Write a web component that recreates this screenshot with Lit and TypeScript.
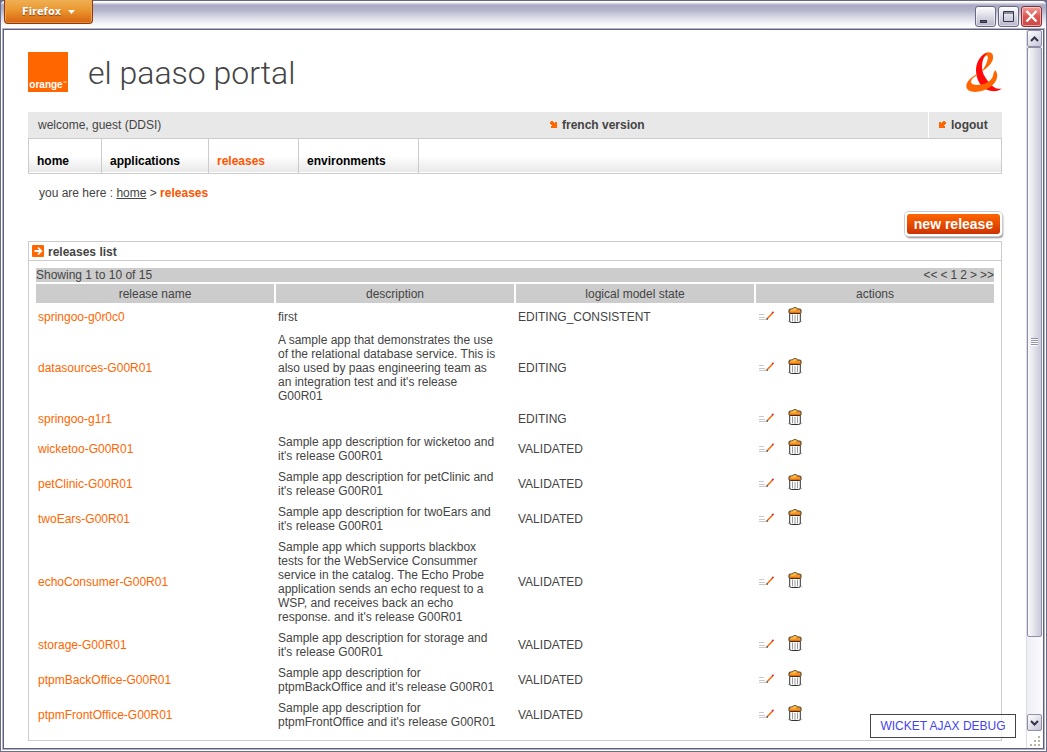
import { LitElement, html, css, svg } from "lit";
import { customElement } from "lit/decorators.js";

interface Release {
  name: string;
  description: string;
  state: string;
}

const RELEASES: Release[] = [
  { name: "springoo-g0r0c0", description: "first", state: "EDITING_CONSISTENT" },
  {
    name: "datasources-G00R01",
    description:
      "A sample app that demonstrates the use of the relational database service. This is also used by paas engineering team as an integration test and it's release G00R01",
    state: "EDITING",
  },
  { name: "springoo-g1r1", description: "", state: "EDITING" },
  { name: "wicketoo-G00R01", description: "Sample app description for wicketoo and it's release G00R01", state: "VALIDATED" },
  { name: "petClinic-G00R01", description: "Sample app description for petClinic and it's release G00R01", state: "VALIDATED" },
  { name: "twoEars-G00R01", description: "Sample app description for twoEars and it's release G00R01", state: "VALIDATED" },
  {
    name: "echoConsumer-G00R01",
    description:
      "Sample app which supports blackbox tests for the WebService Consummer service in the catalog. The Echo Probe application sends an echo request to a WSP, and receives back an echo response. and it's release G00R01",
    state: "VALIDATED",
  },
  { name: "storage-G00R01", description: "Sample app description for storage and it's release G00R01", state: "VALIDATED" },
  { name: "ptpmBackOffice-G00R01", description: "Sample app description for ptpmBackOffice and it's release G00R01", state: "VALIDATED" },
  { name: "ptpmFrontOffice-G00R01", description: "Sample app description for ptpmFrontOffice and it's release G00R01", state: "VALIDATED" },
];

const editIcon = html`<svg width="16" height="10" viewBox="0 0 16 10" aria-hidden="true">
  <path d="M1 3.500h5M1 6.500h6M1 8.500h7" stroke="#c8c8c8" stroke-width="1" fill="none" />
  <path d="M9.300 7.600L14.200 2.400" stroke="#ff6600" stroke-width="1.500" fill="none" />
  <path d="M8.600 8.600L9.600 7.400" stroke="#333" stroke-width="1.500" />
  <path d="M14 2.400L15.500 .8" stroke="#c22" stroke-width="1.500" />
</svg>`;

const trashIcon = html`<svg width="16" height="17" viewBox="0 0 16 17" aria-hidden="true">
  <ellipse cx="8" cy="14.500" rx="7.500" ry="1.500" fill="#c8c8c8" />
  <path d="M2.700 6.500h10.600v7.500q0 1.500-2 1.500H4.700q-2 0-2-1.500z" fill="#fff" stroke="#333" />
  <path d="M5.500 7.500v6.800M8 8v7M10.500 7.500v6.800" stroke="#999" stroke-width="1" />
  <path d="M2 3q0-1 1.500-1h2L6.500.8h3L10.500 2h2q1.500 0 1.500 1v2.500q0 1-1.500 1h-9q-1.500 0-1.500-1z" fill="#f79226" stroke="#40301c" />
  <path d="M6.500 1.900h3M4 3h4" stroke="#ffd24a" stroke-width="1.200" />
  <path d="M3 5.500h10" stroke="#e8700c" stroke-width="1" />
</svg>`;

const arrowShape = svg`<path d="M1 0h2v1h1v1h1V1h2v6H1V5h1V4H1V3H0V1h1z" />`;

@customElement("app-root")
export class AppRoot extends LitElement {
  static styles = css`
    :host {
      display: block;
      height: 100vh;
      font: 12px/14px "Liberation Sans", Arial, sans-serif;
      color: #444;
    }
    * { box-sizing: border-box; }
    svg { display: block; }
    button { font: inherit; margin: 0; padding: 0; cursor: pointer; }
    a { color: inherit; text-decoration: none; }
    .window {
      position: relative;
      display: flex;
      flex-direction: column;
      height: 100%;
      padding: 0 1px 1px;
      background: #6c6c8c;
    }
    .titlebar {
      display: flex;
      justify-content: space-between;
      align-items: flex-start;
      flex: none;
      height: 28px;
      padding: 0 4px 0 3px;
      border-top: 1px solid #66667f;
      border-radius: 4px 4px 0 0;
      background: linear-gradient(#fff 0, #fff 1px, #a9a9c3 4px, #b4b4ca 9px, #dcdce8 17px, #f6f6fa 23px, #fff 27px);
    }
    .firefox {
      display: flex;
      align-items: center;
      justify-content: center;
      gap: 7px;
      width: 89px;
      height: 24px;
      margin-top: -1px;
      border: 1px solid #8a3c0e;
      border-top: 0;
      border-radius: 0 0 4px 4px;
      background: linear-gradient(#f0b054, #ea962f 45%, #d8630f);
      box-shadow: inset 0 -1px #e48a3c, inset 1px 0 #eea457, inset -1px 0 #eea457;
      font: bold 11px/14px "DejaVu Sans Condensed", "DejaVu Sans", sans-serif;
      color: #fff;
      text-shadow: 0 1px 1px #8a3c0e;
    }
    .controls { display: flex; gap: 2px; padding-top: 5px; }
    .control {
      width: 21px;
      height: 21px;
      border: 1px solid #686886;
      border-radius: 3px;
      background: linear-gradient(#fff, #d6d6e2 55%, #b6b6ca);
      box-shadow: inset 0 0 0 1px rgba(255, 255, 255, 0.5);
    }
    .close { border-color: #8c2c34; background: linear-gradient(#f0a09c, #dc5652 50%, #cc4644); }
    .frame {
      display: flex;
      flex: 1;
      min-height: 0;
      padding: 1px 2px 2px;
      background: #fff;
    }
    .viewport {
      display: flex;
      flex: 1;
      min-width: 0;
      border: 1px solid #5f5f80;
      box-shadow: 0 0 0 1px #b4b4c8;
      background: #fff;
    }
    .page {
      flex: 1;
      min-width: 0;
      overflow: hidden;
      padding: 22px 24px 0;
    }
    .header { display: flex; align-items: center; height: 40px; gap: 20px; }
    .orange {
      display: flex;
      align-items: flex-end;
      justify-content: center;
      width: 40px;
      height: 40px;
      background: #ff6600;
      color: #fff;
      font-size: 10px;
      line-height: 14px;
      font-weight: bold;
    }
    .orange sup { font-size: 4px; line-height: 4px; padding-bottom: 7px; font-weight: normal; }
    .title {
      flex: 1;
      margin: 0;
      padding-top: 2px;
      font: 300 32px/40px Roboto, "Liberation Sans", sans-serif;
    }
    .userbar {
      display: grid;
      grid-template-columns: 522fr 378fr 74px;
      height: 26px;
      margin-top: 20px;
      background: #e8e8e8;
      line-height: 26px;
    }
    .welcome { padding-left: 10px; }
    .userlink { display: flex; align-items: center; font-weight: bold; gap: 4px; }
    .logout { border-left: 1px solid #fff; padding-left: 9px; gap: 5px; }
    .nav {
      display: grid;
      grid-template-columns: 73px 107px 90px 120px;
      height: 36px;
      border: 1px solid #ccc;
      background: linear-gradient(#fff 50%, #e8e8e8 97%, #fff 97%);
      font-weight: bold;
      line-height: 14px;
      color: #000;
    }
    .tab { padding: 15px 0 0 8px; border-right: 1px solid #ccc; }
    .active { color: #ff5500; }
    .crumbs { margin: 12px 0 0; padding-left: 11px; }
    .crumbs a { text-decoration: underline; }
    .crumbs b { color: #ff5500; }
    .toolbar { display: flex; justify-content: flex-end; padding: 12px 0 5px; }
    .create {
      width: 97px;
      height: 24px;
      border: 2px solid #fff;
      border-radius: 4px;
      background: linear-gradient(#ff6600, #cc3300) padding-box;
      box-shadow: 0 0 0 1px #ccc, 1px 2px 2px #888;
      color: #fff;
      font-weight: bold;
      font-size: 14px;
      line-height: 18px;
    }
    .panel { border: 1px solid #ccc; padding-bottom: 7px; }
    .heading {
      display: flex;
      align-items: center;
      gap: 4px;
      height: 19px;
      margin: 0;
      padding: 2px 3px 0;
      border-bottom: 1px solid #ccc;
      font-size: 12px;
      line-height: 14px;
    }
    .badge { margin-bottom: 3px; }
    .releases {
      width: calc(100% - 10px);
      margin: 5px 5px 0;
      table-layout: fixed;
      border-spacing: 2px;
    }
    th { font-weight: normal; background: #ccc; padding: 3px 0 2px; text-align: center; }
    .summary { padding: 0; }
    .pager { display: flex; justify-content: space-between; }
    .pages { display: flex; gap: 3px; }
    td { padding: 3px 2px 2px; vertical-align: middle; height: 23px; }
    .description { padding-right: 14px; }
    .name { color: #ff6600; }
    .actions { display: flex; align-items: center; gap: 13px; height: 16px; margin-top: -3px; }
    .action { border: 0; background: none; display: block; }
    .debug {
      position: absolute;
      right: 31px;
      bottom: 14px;
      width: 146px;
      height: 24px;
      border: 1px solid #444;
      background: rgba(255, 255, 255, 0.7);
      color: #4444ee;
      line-height: 22px;
      text-align: center;
    }
    .scroll {
      display: flex;
      flex-direction: column;
      flex: none;
      width: 17px;
      padding-right: 1px;
      border-left: 1px solid #dcdce4;
      background: linear-gradient(90deg, #eeeef5, #fbfbfe);
    }
    .arrow {
      display: flex;
      align-items: center;
      justify-content: center;
      flex: none;
      height: 17px;
      border: 1px solid #8e8ea4;
      border-radius: 2px;
      background: linear-gradient(135deg, #fff, #c4c4d6);
    }
    .track { flex: 1; display: flex; flex-direction: column; }
    .thumb {
      display: flex;
      align-items: center;
      justify-content: center;
      height: 88.4%;
      border: 1px solid #8e8ea4;
      border-radius: 2px;
      background: linear-gradient(90deg, #fafafc, #c8c8d8);
    }
    .grip { width: 7px; height: 8px; background: repeating-linear-gradient(#8e8ea4 0 1px, #fff 1px 2px); }
    .corner { flex: none; display: flex; justify-content: flex-end; align-items: flex-end; height: 17px; background: #fff; }
  `;

  render() {
    return html`
      <div class="window">
        <div class="titlebar">
          <button class="firefox">Firefox
            <svg width="7" height="4" viewBox="0 0 7 4"><path d="M0 0h7L3.5 4z" fill="#fff" /></svg>
          </button>
          <div class="controls">
            <button class="control" aria-label="Minimize">
              <svg width="19" height="19"><path d="M4 13h7v3H4z" fill="#33334d" /><path d="M5 14h5v1H5z" fill="#555570" /></svg>
            </button>
            <button class="control" aria-label="Maximize">
              <svg width="19" height="19"><path d="M4.5 4.5h10v10h-10zM4 6h11" fill="none" stroke="#33334d" /></svg>
            </button>
            <button class="control close" aria-label="Close">
              <svg width="19" height="19"><path d="M4.5 4L14.5 14.5M14.5 4L4.5 14.5" stroke="#fff" stroke-width="2.4" /></svg>
            </button>
          </div>
        </div>
        <div class="frame">
          <div class="viewport">
            <main class="page">
              <header class="header">
                <div class="orange">orange<sup>™</sup></div>
                <h1 class="title">el paaso portal</h1>
                <svg width="36" height="41" viewBox="0 0 36 41" aria-hidden="true">
                  <path d="M13 9C15 4 19 .3 22.500 .3C26.500 .3 27.800 3.500 26.800 7.500C25.500 12 21 16.500 15.500 19.500C18.500 15.500 21 11.500 21.700 7C22.200 3.500 21 2.700 19 4.500z" fill="#ff6600" />
                  <path d="M21.500 .6C15 2.500 10 10 10 18.500C10.300 27 14 34.500 20.500 37.500C25.500 39.800 32 40 35.800 36.500C31 37.500 27 35.500 23.500 31C19 25.500 16 21 16 14.500C16 9 17.800 4 21.500 .6z" fill="#ff0a0a" />
                  <path d="M11.300 22C5 25 .5 29.500 .3 34C.2 38.500 5 40.300 11 39.800C20 39 27.500 34 30.300 28C32 24 31.300 21 29.500 18.200C28 19.500 27.300 21.500 27.200 23C26.500 27.500 21.500 31.500 15.500 32.500C10 33.400 5.200 32.800 5 30C4.900 27.500 8 24.500 11.500 23z" fill="#ff6600" />
                </svg>
              </header>
              <div class="userbar">
                <span class="welcome">welcome, guest (DDSI)</span>
                <a class="userlink" href="#">
                  <svg width="8" height="8" viewBox="0 0 8 8" fill="#ff6600">${arrowShape}</svg>french version</a>
                <a class="userlink logout" href="#">
                  <svg width="8" height="8" viewBox="0 0 8 8" fill="#ff6600"><g transform="matrix(-1 0 0 1 8 0)">${arrowShape}</g></svg>logout</a>
              </div>
              <nav class="nav">
                <a class="tab" href="#">home</a>
                <a class="tab" href="#">applications</a>
                <a class="tab active" href="#">releases</a>
                <a class="tab" href="#">environments</a>
              </nav>
              <p class="crumbs">you are here : <a href="#">home</a> &gt; <b>releases</b></p>
              <div class="toolbar"><button class="create">new release</button></div>
              <section class="panel">
                <h2 class="heading">
                  <svg class="badge" width="12" height="12" viewBox="0 0 12 12" aria-hidden="true">
                    <rect width="12" height="12" rx="1" fill="#ff6600" />
                    <path d="M2.500 6H9M6 2.500L9.300 6L6 9.500" fill="none" stroke="#fff" stroke-width="1.800" />
                  </svg>releases list
                </h2>
                <table class="releases">
                  <thead>
                    <tr>
                      <th class="summary" colspan="4">
                        <div class="pager">
                          <span>Showing 1 to 10 of 15</span>
                          <span class="pages"><span>&lt;&lt;</span><span>&lt;</span><span>1</span><a href="#">2</a><a href="#">&gt;</a><a href="#">&gt;&gt;</a></span>
                        </div>
                      </th>
                    </tr>
                    <tr><th>release name</th><th>description</th><th>logical model state</th><th>actions</th></tr>
                  </thead>
                  <tbody>
                    ${RELEASES.map(
                      (r) => html`<tr>
                        <td><a class="name" href="#">${r.name}</a></td>
                        <td class="description">${r.description}</td>
                        <td>${r.state}</td>
                        <td>
                          <div class="actions">
                            <button class="action" aria-label="Edit">${editIcon}</button>
                            <button class="action" aria-label="Delete">${trashIcon}</button>
                          </div>
                        </td>
                      </tr>`
                    )}
                  </tbody>
                </table>
              </section>
            </main>
            <div class="scroll">
              <button class="arrow" aria-label="Scroll up">
                <svg width="9" height="6" viewBox="0 0 9 6"><path d="M1 5L4.500 1.500L8 5" fill="none" stroke="#33334d" stroke-width="2" /></svg>
              </button>
              <div class="track"><div class="thumb"><div class="grip"></div></div></div>
              <button class="arrow" aria-label="Scroll down">
                <svg width="9" height="6" viewBox="0 0 9 6"><path d="M1 1L4.500 4.500L8 1" fill="none" stroke="#33334d" stroke-width="2" /></svg>
              </button>
              <div class="corner">
                <svg width="12" height="12" viewBox="0 0 12 12" fill="#b8b49c"><path d="M8 0h2v2H8zM8 4h2v2H8zM4 4h2v2H4zM8 8h2v2H8zM4 8h2v2H4zM0 8h2v2H0z" /></svg>
              </div>
            </div>
          </div>
        </div>
        <a class="debug" href="#">WICKET AJAX DEBUG</a>
      </div>
    `;
  }
}
